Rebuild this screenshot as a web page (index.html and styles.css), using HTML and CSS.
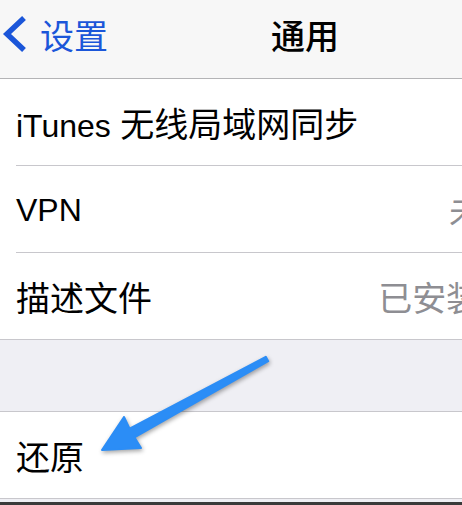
FILE: index.html
```html
<!DOCTYPE html>
<html lang="zh-CN">
<head>
    <meta charset="UTF-8">
    <meta name="viewport" content="width=device-width, initial-scale=1.0">
    <title>通用</title>
    <link rel="stylesheet" href="styles.css">
</head>
<body>

<div class="pantalla">
    <!-- Barra de navegación -->
    <header class="navbar">
        <a class="atras" href="#">
            <svg class="chevron" width="30" height="40" viewBox="0 0 30 40">
                <path d="M24 4 L7 20 L24 36" fill="none" stroke="#1b56d9" stroke-width="5.5"/>
            </svg>
            <span>设置</span>
        </a>
        <h1 class="titulo">通用</h1>
    </header>

    <!-- Primer grupo -->
    <section class="grupo grupo-primero">
        <div class="celda">
            <div class="celda-cuerpo">
                <span class="etiqueta"><span class="latin">iTunes</span> 无线局域网同步</span>
                <svg class="flecha-der" width="13" height="22" viewBox="0 0 13 22"><path d="M2 2 L11 11 L2 20" fill="none" stroke="#c7c7cc" stroke-width="2.5"/></svg>
            </div>
        </div>
        <div class="celda">
            <div class="celda-cuerpo">
                <span class="etiqueta"><span class="latin">VPN</span></span>
                <span class="valor">未连接</span>
                <svg class="flecha-der" width="13" height="22" viewBox="0 0 13 22"><path d="M2 2 L11 11 L2 20" fill="none" stroke="#c7c7cc" stroke-width="2.5"/></svg>
            </div>
        </div>
        <div class="celda">
            <div class="celda-cuerpo">
                <span class="etiqueta">描述文件</span>
                <span class="valor">已安装 <span class="latin">2</span> 个</span>
                <svg class="flecha-der" width="13" height="22" viewBox="0 0 13 22"><path d="M2 2 L11 11 L2 20" fill="none" stroke="#c7c7cc" stroke-width="2.5"/></svg>
            </div>
        </div>
    </section>

    <div class="separador"></div>

    <!-- Segundo grupo -->
    <section class="grupo">
        <div class="celda">
            <div class="celda-cuerpo">
                <span class="etiqueta">还原</span>
                <svg class="flecha-der" width="13" height="22" viewBox="0 0 13 22"><path d="M2 2 L11 11 L2 20" fill="none" stroke="#c7c7cc" stroke-width="2.5"/></svg>
            </div>
        </div>
    </section>

    <div class="pie"></div>

    <!-- Flecha azul de anotación -->
    <svg class="anotacion" width="462" height="505" viewBox="0 0 462 505">
        <polygon points="265.8,356.8 129.6,428.6 124,417 102,450 141,448 134.4,437.4 268.2,361.2"
                 fill="#2b8df6" stroke="#2b8df6" stroke-width="2" stroke-linejoin="round"/>
    </svg>
</div>

</body>
</html>
```

FILE: styles.css
```css
body {
    margin: 0;
    padding: 0;
    overflow: hidden;
    background-color: #efeff4;
    font-family: "Liberation Sans", "Noto Sans CJK SC", sans-serif;
}

/* Pantalla completa (más ancha que la captura) */
.pantalla {
    position: relative;
    width: 610px;
    height: 505px;
    background-color: #efeff4;
}

/* Barra de navegación */
.navbar {
    height: 68px;
    padding-bottom: 10px;
    display: grid;
    grid-template-columns: 1fr auto 1fr;
    align-items: center;
    background-color: #f7f7f7;
    border-bottom: 1px solid #b4b4b6;
}

.atras {
    display: flex;
    align-items: center;
    gap: 10px;
    color: #1b56d9;
    text-decoration: none;
    font-family: "Noto Sans CJK SC", sans-serif;
    font-size: 34px;
}

.chevron {
    display: block;
}

.titulo {
    margin: 0;
    font-family: "Noto Sans CJK SC", sans-serif;
    font-size: 34px;
    font-weight: 500;
    color: #000;
}

/* Grupos de celdas */
.grupo {
    background-color: #fff;
    border-top: 1px solid #c8c7cc;
    border-bottom: 1px solid #c8c7cc;
}

.grupo-primero {
    border-top: none;
}

.celda {
    padding-left: 16px;
}

.celda-cuerpo {
    height: 86px;
    display: flex;
    align-items: center;
    padding-right: 32px;
    border-bottom: 1px solid #c8c7cc;
}

.celda:last-child .celda-cuerpo {
    border-bottom: none;
}

.etiqueta {
    flex: 1;
    white-space: nowrap;
    font-family: "Liberation Sans", "Noto Sans CJK SC", sans-serif;
    font-size: 34px;
    color: #000;
}

.latin {
    font-size: 32px;
}

.valor {
    white-space: nowrap;
    margin-right: 14px;
    font-size: 34px;
    color: #8e8e93;
}

.flecha-der {
    display: block;
    flex-shrink: 0;
}

/* Espacio gris entre grupos */
.separador {
    height: 71px;
}

/* Franja inferior */
.pie {
    height: 3px;
    border-bottom: 4px solid #3a3a3a;
}

/* Flecha de anotación sobre el contenido */
.anotacion {
    position: absolute;
    top: 0;
    left: 0;
    pointer-events: none;
    filter: drop-shadow(1px 2px 2px rgba(0, 0, 0, 0.35));
}
```
